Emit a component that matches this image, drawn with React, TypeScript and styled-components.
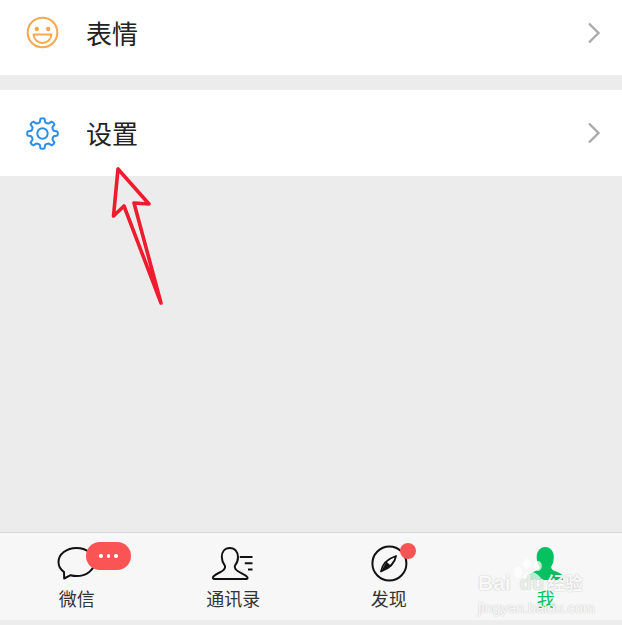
import React from 'react';
import styled, { createGlobalStyle } from 'styled-components';

const Global = createGlobalStyle`
  html, body { margin: 0; padding: 0; height: 625px; overflow: hidden; background: #ececec; }
  * { box-sizing: border-box; }
`;
const Page = styled.div`
  position: relative;
  width: 622px;
  height: 625px;
  display: flex;
  flex-direction: column;
  background: #ececec;
  font-family: "Noto Sans CJK SC", "Noto Sans", sans-serif;
  overflow: hidden;
`;
const Row = styled.div<{ $h: number; $mt?: number }>`
  height: ${p => p.$h}px;
  margin-top: ${p => p.$mt ?? 0}px;
  background: #fff;
  display: flex;
  align-items: center;
  padding: 0 21px 0 25.5px;
  flex: none;
`;
const RowIcon = styled.svg`
  width: 33px;
  height: 33px;
  flex: none;
`;
const RowTitle = styled.span`
  margin-left: 27.5px;
  font-size: 26px;
  line-height: 34px;
  color: #222;
  flex: 1;
`;
const Chevron = styled.svg`
  width: 14px;
  height: 22px;
  flex: none;
`;
const Spacer = styled.div`
  flex: 1;
`;
const TabBar = styled.nav`
  height: 88px;
  flex: none;
  background: #f7f7f7;
  border-top: 1px solid #d9d9d9;
  display: grid;
  grid-template-columns: repeat(4, 1fr);
`;
const BottomStrip = styled.div`
  height: 5px;
  flex: none;
  background: #ededed;
`;
const Tab = styled.div`
  display: flex;
  flex-direction: column;
  align-items: center;
  padding-top: 12px;
`;
const IconWrap = styled.div`
  position: relative;
  width: 44px;
  height: 38px;
`;
const TabIcon = styled.svg`
  width: 44px;
  height: 38px;
  display: block;
`;
const Pill = styled.div`
  position: absolute;
  left: 30px;
  top: -3px;
  width: 45px;
  height: 28px;
  border-radius: 14px;
  background: #fb5454;
  display: flex;
  align-items: center;
  justify-content: center;
  gap: 4px;
`;
const PillDot = styled.span`
  width: 3.5px;
  height: 3.5px;
  border-radius: 50%;
  background: #fff;
`;
const Dot = styled.div`
  position: absolute;
  left: 33px;
  top: -2px;
  width: 16px;
  height: 16px;
  border-radius: 50%;
  background: #fb5454;
`;
const TabLabel = styled.span<{ $active?: boolean; $nudge?: number }>`
  margin-top: 2px;
  margin-left: ${p => Math.max(p.$nudge ?? 0, 0)}px;
  margin-right: ${p => Math.max(-(p.$nudge ?? 0), 0)}px;
  font-size: 18px;
  line-height: 26px;
  color: ${p => (p.$active ? '#07c160' : '#333')};
`;
const Arrow = styled.svg`
  position: absolute;
  left: 0;
  top: 0;
  width: 622px;
  height: 625px;
  pointer-events: none;
`;
const Watermark = styled.div`
  position: absolute;
  left: 478px;
  top: 570px;
  color: rgba(255, 255, 255, 0.92);
  text-shadow: 0 0 1.5px rgba(0, 0, 0, 0.28);
  font-family: "Liberation Sans", sans-serif;
  pointer-events: none;
`;
const MarkMain = styled.div`
  display: flex;
  align-items: baseline;
  font-size: 21px;
  line-height: 24px;
  font-weight: 700;
`;
const MarkDu = styled.span`
  margin-left: 9px;
  font-size: 20px;
  color: #e8efe9;
`;
const MarkCn = styled.span`
  font-family: "Noto Sans CJK SC", sans-serif;
  font-size: 18px;
  margin-left: 3px;
`;
const MarkSub = styled.div`
  font-size: 14.5px;
  line-height: 16px;
  margin-top: 5px;
`;
const Paw = styled.svg`
  position: absolute;
  left: 512px;
  top: 558px;
  width: 40px;
  height: 40px;
  pointer-events: none;
`;

const ChevronIcon = () => (
  <Chevron viewBox="0 0 14 22">
    <path d="M2 1.5 L11.5 11 L2 20.5" fill="none" stroke="#aaa" strokeWidth="2.4" />
  </Chevron>
);

const gearPath = (() => {
  const cx = 16.5, cy = 16.5, teeth = 8;
  const pts: string[] = [];
  for (let i = 0; i < teeth; i++) {
    const a = (i / teeth) * Math.PI * 2 - Math.PI / 2;
    const step = (Math.PI * 2) / teeth;
    const p = (ang: number, r: number) => `${(cx + Math.cos(ang) * r).toFixed(2)} ${(cy + Math.sin(ang) * r).toFixed(2)}`;
    pts.push(`${i === 0 ? 'M' : 'L'}${p(a - step * 0.17, 15)}`);
    pts.push(`Q${p(a, 15.8)} ${p(a + step * 0.17, 15)}`);
    pts.push(`L${p(a + step * 0.3, 11.6)}`);
    pts.push(`Q${p(a + step * 0.5, 10.8)} ${p(a + step * 0.7, 11.6)}`);
  }
  return pts.join(' ') + ' Z';
})();

export default function App() {
  return (
    <Page>
      <Global />
      <Row $h={85} $mt={-10}>
        <RowIcon viewBox="0 0 33 33">
          <circle cx="16.5" cy="16.5" r="14.8" fill="none" stroke="#f6a74f" strokeWidth="2" />
          <circle cx="10.8" cy="13" r="2.2" fill="#f6a74f" />
          <circle cx="22.2" cy="13" r="2.2" fill="#f6a74f" />
          <path d="M7.5 18.5 H25.5 C25 24 21 27 16.5 27 C12 27 8 24 7.5 18.5 Z" fill="none" stroke="#f6a74f" strokeWidth="2" strokeLinejoin="round" />
        </RowIcon>
        <RowTitle>表情</RowTitle>
        <ChevronIcon />
      </Row>
      <Row $h={86} $mt={15}>
        <RowIcon viewBox="0 0 33 33">
          <path d={gearPath} fill="none" stroke="#2b8fea" strokeWidth="2" strokeLinejoin="round" />
          <circle cx="16.5" cy="16.5" r="5.2" fill="none" stroke="#2b8fea" strokeWidth="2" />
        </RowIcon>
        <RowTitle>设置</RowTitle>
        <ChevronIcon />
      </Row>
      <Spacer />
      <TabBar>
        <Tab>
          <IconWrap>
            <TabIcon viewBox="0 0 44 38">
              <path d="M20.5 3 C30.5 3 38.5 9.2 38.5 17 C38.5 24.8 30.5 31 20.5 31 C18.5 31 16.5 30.7 14.6 30.2 L8.2 33.5 L8 27 C4.4 24.4 2.5 21 2.5 17 C2.5 9.2 10.5 3 20.5 3 Z" fill="none" stroke="#111" strokeWidth="2" strokeLinejoin="round" />
            </TabIcon>
            <Pill>
              <PillDot />
              <PillDot />
              <PillDot />
            </Pill>
          </IconWrap>
          <TabLabel $nudge={-2}>微信</TabLabel>
        </Tab>
        <Tab>
          <IconWrap>
            <TabIcon viewBox="0 0 44 38">
              <path d="M18.8 3 C13.6 3 10.8 7 10.8 12 C10.8 16 12.5 19 14 21 C14.5 23.5 13 25 10.5 26.5 C7 28.5 3.2 29.8 2.2 32 C1.6 33.4 2.2 34 3.4 34 H35.2 C36.6 34 37 33 36.2 32 C34.4 29.6 30.4 28.4 27.4 26.5 C24.8 25 23.4 23.5 23.8 21 C25.4 19 27 16 27 12 C27 7 24 3 18.8 3 Z" fill="none" stroke="#111" strokeWidth="2" strokeLinejoin="round" />
              <path d="M28.8 12 H41.5 M33.8 18.3 H41.5 M37 24.5 H41.5" fill="none" stroke="#111" strokeWidth="2" />
            </TabIcon>
          </IconWrap>
          <TabLabel>通讯录</TabLabel>
        </Tab>
        <Tab>
          <IconWrap>
            <TabIcon viewBox="0 0 44 38">
              <circle cx="22.4" cy="18.5" r="17" fill="none" stroke="#111" strokeWidth="2" />
              <path d="M29 11 C28 17 23 23 14 26.5 C15 20 20 14 29 11 Z" fill="none" stroke="#111" strokeWidth="1.8" strokeLinejoin="round" />
              <path d="M14 26.5 L19.4 16.4 L23.8 20.8 Z" fill="#111" />
            </TabIcon>
            <Dot />
          </IconWrap>
          <TabLabel>发现</TabLabel>
        </Tab>
        <Tab>
          <IconWrap>
            <TabIcon viewBox="0 0 44 38">
              <path d="M23.3 2 C18 2 14.7 6.5 14.7 12 C14.7 16.5 16 19.5 17.5 21.5 C17.8 23.5 16 25 13.5 26 C10.5 27.5 7 28.5 6 31 L6 35 H41 L41 31 C40 28.5 36 27.5 33 26 C30.5 25 28.8 23.5 29.2 21.5 C30.6 19.5 31.8 16.5 31.8 12 C31.8 6.5 28.6 2 23.3 2 Z" fill="#07c160" />
            </TabIcon>
          </IconWrap>
          <TabLabel $active $nudge={3}>我</TabLabel>
        </Tab>
      </TabBar>
      <BottomStrip />
      <Paw viewBox="0 0 40 40">
        <g fill="rgba(255,255,255,0.72)">
          <ellipse cx="6" cy="14" rx="4" ry="5.5" />
          <ellipse cx="15" cy="6" rx="4" ry="5" />
          <ellipse cx="26" cy="8" rx="3.8" ry="5" />
          <path d="M19 14 C13 14 8 22 7.5 28 C7.5 34 14 35 20 33 C27 35 34 34 33 28 C32 22 25 14 19 14 Z" />
        </g>
      </Paw>
      <Watermark>
        <MarkMain>Bai<MarkDu>du</MarkDu><MarkCn>经验</MarkCn></MarkMain>
        <MarkSub>jingyan.baidu.com</MarkSub>
      </Watermark>
      <Arrow viewBox="0 0 622 625">
        <path d="M161 303 L134 203 L149 204 L118 169 L113.5 216 L124 206 L161 303 Z" fill="none" stroke="#ee1c2e" strokeWidth="3.6" strokeLinejoin="round" strokeLinecap="round" />
      </Arrow>
    </Page>
  );
}
